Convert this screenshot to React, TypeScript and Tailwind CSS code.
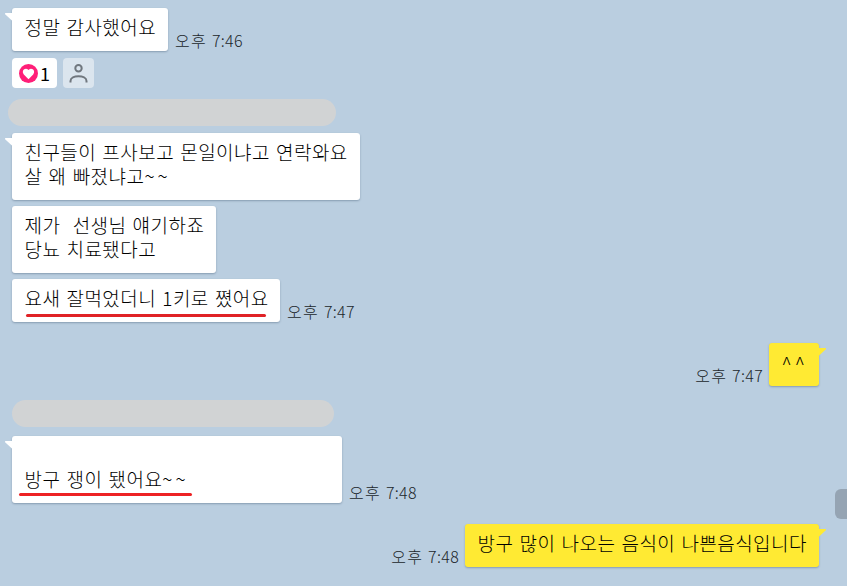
import type { ReactNode } from "react"
import clsx from "clsx"

type BubbleProps = {
  children: ReactNode
  className?: string
  mine?: boolean
  tail?: boolean
}

function Bubble({ children, className, mine = false, tail = false }: BubbleProps) {
  return (
    <div
      className={clsx(
        "relative shrink-0 rounded-[3px] pt-[7px] pb-[12px] pl-[12.5px] text-[19px] leading-6 tracking-[0.45px] whitespace-pre text-black [word-spacing:1.5px] shadow-[0_1px_2px_rgba(70,95,120,0.45)]",
        mine ? "bg-[#ffea33]" : "bg-white",
        className,
      )}
    >
      {tail && (
        <svg
          className={clsx("absolute top-[5px] h-[9px] w-[8px]", mine ? "-right-[7px] -scale-x-100" : "-left-[7px]")}
          viewBox="0 0 8 9"
        >
          <path d="M0 0H8V8.5L0.4 1.4Z" fill={mine ? "#ffea33" : "#fff"} />
        </svg>
      )}
      {children}
    </div>
  )
}

function Time({ children }: { children: string }) {
  return (
    <span className="mb-px h-5 shrink-0 text-[16px] leading-5 tracking-[0.3px] whitespace-pre text-[#20262b]">
      <span className="tracking-[1.3px]">오후 </span>
      {children}
    </span>
  )
}

function Reactions() {
  return (
    <div className="mt-[7px] ml-3 flex h-[30px] gap-[6px]">
      <div className="flex w-[45px] items-center rounded-[4px] bg-white pl-[7px]">
        <svg className="size-[19px]" viewBox="0 0 19 19">
          <circle cx="9.5" cy="9.5" r="9.5" fill="#ff1f78" />
          <path
            d="M9.5 15.3L4.8 10.4C1.9 7 6.2 2.6 9.5 6.1C12.8 2.6 17.1 7 14.2 10.4Z"
            fill="#fff"
          />
        </svg>
        <span className="ml-[2px] text-[18px] leading-5 font-normal text-black">1</span>
      </div>
      <div className="flex w-[31px] items-center justify-center rounded-[4px] bg-[#dbe5ee]">
        <svg className="h-[19px] w-[19px]" viewBox="0 0 19 19" fill="none" stroke="#70777e" strokeWidth="2">
          <circle cx="9.5" cy="4.2" r="3.2" />
          <path d="M1.5 18.5V17C1.5 10.8 17.5 10.8 17.5 17V18.5" />
        </svg>
      </div>
    </div>
  )
}

export default function App() {
  return (
    <div className="flex h-[586px] w-[847px] overflow-hidden bg-[#bacee0] font-['Noto_Sans_CJK_KR',sans-serif] font-light">
      <div className="flex w-[819px] flex-col pt-2">
        <div className="ml-3 flex items-end gap-[7px]">
          <Bubble className="w-[156px]" tail>정말 감사했어요</Bubble>
          <Time>7:46</Time>
        </div>
        <Reactions />

        <div className="mt-[11px] ml-2 h-[27px] w-[328px] shrink-0 rounded-full bg-[#d1d3d4]" />

        <div className="mt-[7px] ml-3 flex flex-col items-start gap-[6px]">
          <Bubble className="w-[348px]" tail>
            <p>친구들이 프사보고 몬일이냐고 연락와요</p>
            <p>살 왜 빠졌냐고<span className="tracking-[3px]">~~</span></p>
          </Bubble>
          <Bubble className="w-[204px]">
            <p>{"제가  선생님 얘기하죠"}</p>
            <p>당뇨 치료됐다고</p>
          </Bubble>
          <div className="flex items-end gap-[7px]">
            <Bubble className="w-[268px]">
              요새 잘먹었더니 1키로 쪘어요
              <div className="absolute bottom-[5px] left-[14px] h-[3px] w-[240px] rounded-full bg-[#e02226]" />
            </Bubble>
            <Time>7:47</Time>
          </div>
        </div>

        <div className="mt-[21px] flex items-end justify-end gap-[6px]">
          <Time>7:47</Time>
          <Bubble className="w-[50px]" mine tail>
            <span className="relative top-px tracking-[3px]">^^</span>
          </Bubble>
        </div>

        <div className="mt-[14px] ml-3 h-[27px] w-[322px] shrink-0 rounded-full bg-[#d1d3d4]" />

        <div className="mt-[9px] ml-3 flex items-end gap-[7px]">
          <Bubble className="w-[330px]" tail>
            <p className="pt-6">방구 쟁이 됐어요<span className="tracking-[3px]">~~</span></p>
            <div className="absolute bottom-[7px] left-[7px] h-[3px] w-[173px] rounded-full bg-[#ed2224]" />
          </Bubble>
          <Time>7:48</Time>
        </div>

        <div className="mt-[21px] flex items-end justify-end gap-[6px]">
          <Time>7:48</Time>
          <Bubble className="w-[354px]" mine tail>방구 많이 나오는 음식이 나쁜음식입니다</Bubble>
        </div>
      </div>

      {/* scrollbar thumb */}
      <div className="mt-[489px] ml-4 h-[30px] w-3 shrink-0 rounded-l-[6px] bg-[#95a4b3]" />
    </div>
  )
}
